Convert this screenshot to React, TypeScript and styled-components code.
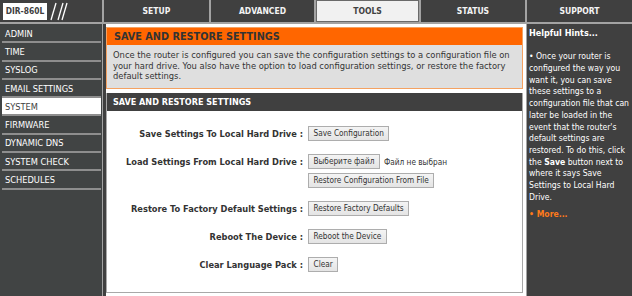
import React from "react";
import styled, { createGlobalStyle } from "styled-components";

const FONT = `"DejaVu Sans Condensed", "Liberation Sans", sans-serif`;

const Global = createGlobalStyle`
  html, body { margin: 0; padding: 0; background: #ffffff; }
  body { font-family: ${FONT}; }
  * { box-sizing: border-box; }
`;

const Page = styled.div`
  width: 632px;
  height: 296px;
  display: flex;
  flex-direction: column;
  gap: 2px;
  background: #a3a3a3;
  overflow: hidden;
`;

const TopBar = styled.div`
  height: 22px;
  display: grid;
  grid-template-columns: 102px 105px 103px 103px 104px 105px;
  column-gap: 2px;
`;

const LogoCell = styled.div`
  background: #404040;
  display: flex;
  align-items: center;
  padding-left: 3px;
  gap: 1px;
`;

const LogoBox = styled.div`
  background: #ffffff;
  width: 44px;
  height: 17px;
  display: flex;
  align-items: center;
  justify-content: center;
  font-weight: bold;
  font-size: 8.4px;
  color: #404040;
`;

const Tab = styled.div<{ $active?: boolean }>`
  background: ${(p) => (p.$active ? "#f1f1f1" : "#404040")};
  color: ${(p) => (p.$active ? "#404040" : "#f4f4f4")};
  border: ${(p) => (p.$active ? "1px solid #6a6a6a" : "none")};
  display: flex;
  align-items: center;
  justify-content: center;
  font-weight: bold;
  font-size: 8.5px;
`;

const Body = styled.div`
  flex: 1;
  display: grid;
  grid-template-columns: 102px 423px 105px;
  column-gap: 1px;
  min-height: 0;
`;

const Sidebar = styled.nav`
  background: #414444;
  display: flex;
  flex-direction: column;
  padding-top: 1px;
`;

const NavItem = styled.div<{ $active?: boolean }>`
  height: 16.3px;
  margin: 0 1px 2px 2px;
  padding-left: 3px;
  display: flex;
  align-items: center;
  font-size: 9.2px;
  color: ${(p) => (p.$active ? "#404040" : "#ffffff")};
  background: ${(p) => (p.$active ? "#ffffff" : "transparent")};
  box-shadow: 0 2px 0 #8e8e8e;
`;

const Main = styled.main`
  background: #ffffff;
  border-left: 3px solid #404040;
  padding: 3px 3px 3px 0;
  display: flex;
  flex-direction: column;
  gap: 4px;
`;

const InfoBox = styled.section`
  border: 1px solid #f4a262;
  background: #dfdfdf;
  height: 62px;
`;

const BoxHeader = styled.h2<{ $dark?: boolean }>`
  margin: 0;
  height: ${(p) => (p.$dark ? "18px" : "17px")};
  padding-left: ${(p) => (p.$dark ? "6px" : "7px")};
  display: flex;
  align-items: center;
  font-size: ${(p) => (p.$dark ? "9px" : "10.8px")};
  font-weight: bold;
  background: ${(p) => (p.$dark ? "#404040" : "#ff6600")};
  color: ${(p) => (p.$dark ? "#ffffff" : "#333333")};
`;

const InfoText = styled.p`
  margin: 0;
  padding: 5px 6px 0 6px;
  font-size: 9.3px;
  line-height: 10.7px;
  color: #333333;
  white-space: nowrap;
`;

const SettingsBox = styled.section`
  flex: 1;
  border: 1px solid #a8a8a8;
  border-top: none;
  display: flex;
  flex-direction: column;
`;

const Form = styled.div`
  padding-top: 15px;
  display: grid;
  grid-template-columns: 196px auto;
  column-gap: 5px;
  row-gap: 13px;
  align-items: start;
`;

const Label = styled.div`
  text-align: right;
  font-size: 9.2px;
  font-weight: bold;
  line-height: 15px;
  color: #333333;
  white-space: nowrap;
`;

const Controls = styled.div`
  display: flex;
  flex-direction: column;
  align-items: flex-start;
  gap: 4px;
`;

const Line = styled.div`
  display: flex;
  align-items: center;
  gap: 4px;
  font-size: 8.2px;
  color: #333333;
`;

const Button = styled.button`
  height: 15px;
  padding: 0 4.5px;
  font-family: ${FONT};
  font-size: 8.2px;
  color: #333333;
  background: linear-gradient(#f4f4f4, #e4e4e4);
  border: 1px solid #adadad;
  border-radius: 0;
  line-height: 13px;
`;

const Hints = styled.aside`
  background: #404040;
  color: #ffffff;
  padding: 4px 2px 0 2px;
  font-size: 8.6px;
  line-height: 11.7px;
`;

const HintTitle = styled.div`
  font-weight: bold;
  font-size: 9px;
  margin-bottom: 11.7px;
`;

const HintList = styled.ul`
  margin: 0;
  padding: 0;
  list-style: none;
`;

const HintItem = styled.li<{ $more?: boolean }>`
  margin-bottom: 6px;
  color: ${(p) => (p.$more ? "#ff7a1a" : "#ffffff")};
  font-weight: ${(p) => (p.$more ? "bold" : "normal")};
`;

const HintLine = styled.div`
  white-space: nowrap;
  height: 11.7px;
  b { font-weight: bold; }
`;

const Slashes = () => (
  <svg width="24" height="20" viewBox="0 0 24 20">
    <line x1="3" y1="19" x2="8" y2="2" stroke="#ffffff" strokeWidth="1.3" />
    <line x1="10" y1="19" x2="15" y2="2" stroke="#ffffff" strokeWidth="1.3" />
    <line x1="14" y1="19" x2="19" y2="2" stroke="#ffffff" strokeWidth="1.3" />
  </svg>
);

const tabs = ["SETUP", "ADVANCED", "TOOLS", "STATUS", "SUPPORT"];
const navs = [
  "ADMIN",
  "TIME",
  "SYSLOG",
  "EMAIL SETTINGS",
  "SYSTEM",
  "FIRMWARE",
  "DYNAMIC DNS",
  "SYSTEM CHECK",
  "SCHEDULES",
];

const hintLines: React.ReactNode[] = [
  "• Once your router is",
  "configured the way you",
  "want it, you can save",
  "these settings to a",
  "configuration file that can",
  "later be loaded in the",
  "event that the router's",
  "default settings are",
  "restored. To do this, click",
  <>
    the <b>Save</b> button next to
  </>,
  "where it says Save",
  "Settings to Local Hard",
  "Drive.",
];

export default function App() {
  return (
    <>
      <Global />
      <Page>
        <TopBar>
          <LogoCell>
            <LogoBox>DIR-860L</LogoBox>
            <Slashes />
          </LogoCell>
          {tabs.map((t) => (
            <Tab key={t} $active={t === "TOOLS"}>
              {t}
            </Tab>
          ))}
        </TopBar>
        <Body>
          <Sidebar>
            {navs.map((n) => (
              <NavItem key={n} $active={n === "SYSTEM"}>
                {n}
              </NavItem>
            ))}
          </Sidebar>
          <Main>
            <InfoBox>
              <BoxHeader>SAVE AND RESTORE SETTINGS</BoxHeader>
              <InfoText>
                Once the router is configured you can save the configuration settings to a configuration file on
                <br />
                your hard drive. You also have the option to load configuration settings, or restore the factory
                <br />
                default settings.
              </InfoText>
            </InfoBox>
            <SettingsBox>
              <BoxHeader $dark>SAVE AND RESTORE SETTINGS</BoxHeader>
              <Form>
                <Label>Save Settings To Local Hard Drive :</Label>
                <Controls>
                  <Button>Save Configuration</Button>
                </Controls>
                <Label>Load Settings From Local Hard Drive :</Label>
                <Controls>
                  <Line>
                    <Button>Выберите файл</Button>
                    <span>Файл не выбран</span>
                  </Line>
                  <Button>Restore Configuration From File</Button>
                </Controls>
                <Label>Restore To Factory Default Settings :</Label>
                <Controls>
                  <Button>Restore Factory Defaults</Button>
                </Controls>
                <Label>Reboot The Device :</Label>
                <Controls>
                  <Button>Reboot the Device</Button>
                </Controls>
                <Label>Clear Language Pack :</Label>
                <Controls>
                  <Button>Clear</Button>
                </Controls>
              </Form>
            </SettingsBox>
          </Main>
          <Hints>
            <HintTitle>Helpful Hints...</HintTitle>
            <HintList>
              <HintItem>
                {hintLines.map((l, i) => (
                  <HintLine key={i}>{l}</HintLine>
                ))}
              </HintItem>
              <HintItem $more>
                <HintLine>• More...</HintLine>
              </HintItem>
            </HintList>
          </Hints>
        </Body>
      </Page>
    </>
  );
}
